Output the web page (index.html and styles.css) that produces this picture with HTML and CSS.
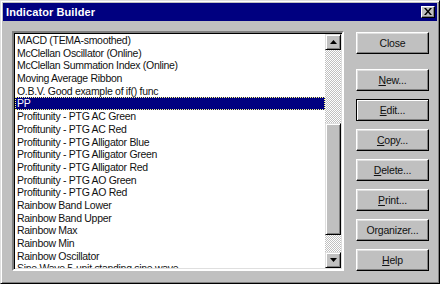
FILE: index.html
```html
<!DOCTYPE html>
<html>
<head>
<meta charset="utf-8">
<link rel="stylesheet" href="styles.css">
</head>
<body>
<div class="window">
  <div class="titlebar">
    <span class="title">Indicator Builder</span>
    <span class="xbtn"><svg width="8" height="7" viewBox="0 0 8 7"><path d="M0 0h2l2 2.5 2-2.5h2l-3 3.5 3 3.5h-2l-2-2.5-2 2.5h-2l3-3.5z" fill="#000"/></svg></span>
  </div>
  <div class="body">
    <div class="listbox">
      <ul class="items">
        <li>MACD (TEMA-smoothed)</li>
        <li>McClellan Oscillator (Online)</li>
        <li>McClellan Summation Index (Online)</li>
        <li>Moving Average Ribbon</li>
        <li>O.B.V. Good example of if() func</li>
        <li class="sel">PP</li>
        <li>Profitunity - PTG AC Green</li>
        <li>Profitunity - PTG AC Red</li>
        <li>Profitunity - PTG Alligator Blue</li>
        <li>Profitunity - PTG Alligator Green</li>
        <li>Profitunity - PTG Alligator Red</li>
        <li>Profitunity - PTG AO Green</li>
        <li>Profitunity - PTG AO Red</li>
        <li>Rainbow Band Lower</li>
        <li>Rainbow Band Upper</li>
        <li>Rainbow Max</li>
        <li>Rainbow Min</li>
        <li>Rainbow Oscillator</li>
        <li>Sine Wave 5-unit standing sine wave</li>
      </ul>
      <div class="scrollbar">
        <div class="arrow"><svg width="7" height="4" viewBox="0 0 7 4"><path d="M3.5 0L7 4H0z" fill="#000"/></svg></div>
        <div class="track t1"></div>
        <div class="thumb"></div>
        <div class="track t2"></div>
        <div class="arrow"><svg width="7" height="4" viewBox="0 0 7 4"><path d="M0 0h7L3.5 4z" fill="#000"/></svg></div>
      </div>
    </div>
    <div class="buttons">
      <div class="btn close">Close</div>
      <div class="btn"><span><u>N</u>ew...</span></div>
      <div class="btn def"><span><u>E</u>dit...</span></div>
      <div class="btn"><span><u>C</u>opy...</span></div>
      <div class="btn"><span><u>D</u>elete...</span></div>
      <div class="btn"><span><u>P</u>rint...</span></div>
      <div class="btn org">Organizer...</div>
      <div class="btn"><span><u>H</u>elp</span></div>
    </div>
  </div>
</div>
</body>
</html>
```
FILE: styles.css
```css
* { box-sizing: border-box; }
html, body { margin: 0; padding: 0; background: #c0c0c0; }
body { width: 440px; height: 284px; overflow: hidden; font-family: "Liberation Sans", Arial, sans-serif; font-size: 11px; color: #000; }
.window {
  width: 440px; height: 284px;
  background: #c0c0c0;
  border: 1px solid; border-color: #dfdfdf #000 #000 #dfdfdf;
  box-shadow: inset 1px 1px #fff, inset -1px -1px #808080;
  padding: 2px;
  display: flex; flex-direction: column;
}
.titlebar {
  height: 18px; background: #000080; color: #fff;
  display: flex; align-items: center; justify-content: space-between;
  padding: 0 2px 0 3px;
}
.title { font-weight: bold; font-size: 11px; letter-spacing: 0.1px; }
.xbtn {
  width: 14px; height: 12px; background: #c0c0c0;
  border: 1px solid; border-color: #fff #000 #000 #fff;
  box-shadow: inset -1px -1px #808080;
  display: flex; align-items: center; justify-content: center;
  padding-bottom: 1px;
}
.body { display: flex; padding: 10px 0 0 9px; }
.listbox {
  width: 332px; height: 240px;
  border: 2px solid; border-color: #808080 #fff #fff #808080;
  box-shadow: inset 1px 1px #000, inset -1px -1px #dfdfdf;
  background: #fff;
  display: flex; padding: 1px;
}
.items { list-style: none; margin: 0; padding: 0; flex: 1; overflow: hidden; }
.items li { height: 12.7px; line-height: 12.7px; padding-left: 2px; white-space: nowrap; color: #111; font-size: 10.5px; letter-spacing: -0.3px; }
.items li.sel { background: #000080; color: #fff; outline: 1px dotted #ffff80; outline-offset: -1px; }
.scrollbar { width: 16px; display: flex; flex-direction: column; }
.arrow, .thumb {
  background: #c0c0c0;
  border: 1px solid; border-color: #dfdfdf #000 #000 #dfdfdf;
  box-shadow: inset 1px 1px #fff, inset -1px -1px #808080;
}
.arrow { height: 16px; display: flex; align-items: center; justify-content: center; }
.track { background: repeating-conic-gradient(#fff 0 25%, #c0c0c0 0 50%) 0 0 / 2px 2px; }
.t1 { height: 73px; }
.thumb { height: 112px; }
.t2 { height: 17px; }
.buttons { display: flex; flex-direction: column; margin-left: 12px; margin-top: 1px; width: 73px; }
.btn {
  height: 22px; margin-bottom: 8px;
  background: #c0c0c0;
  border: 1px solid; border-color: #fff #000 #000 #fff;
  box-shadow: inset -1px -1px #808080, inset 1px 1px #dfdfdf;
  display: flex; align-items: center; justify-content: center;
  font-size: 10.5px; letter-spacing: -0.2px; color: #111;
}
.btn.close { margin-bottom: 15px; }
.btn.def { border-color: #000; box-shadow: inset 1px 1px #fff, inset -1px -1px #808080; }
.btn u { text-decoration: underline; }
```
